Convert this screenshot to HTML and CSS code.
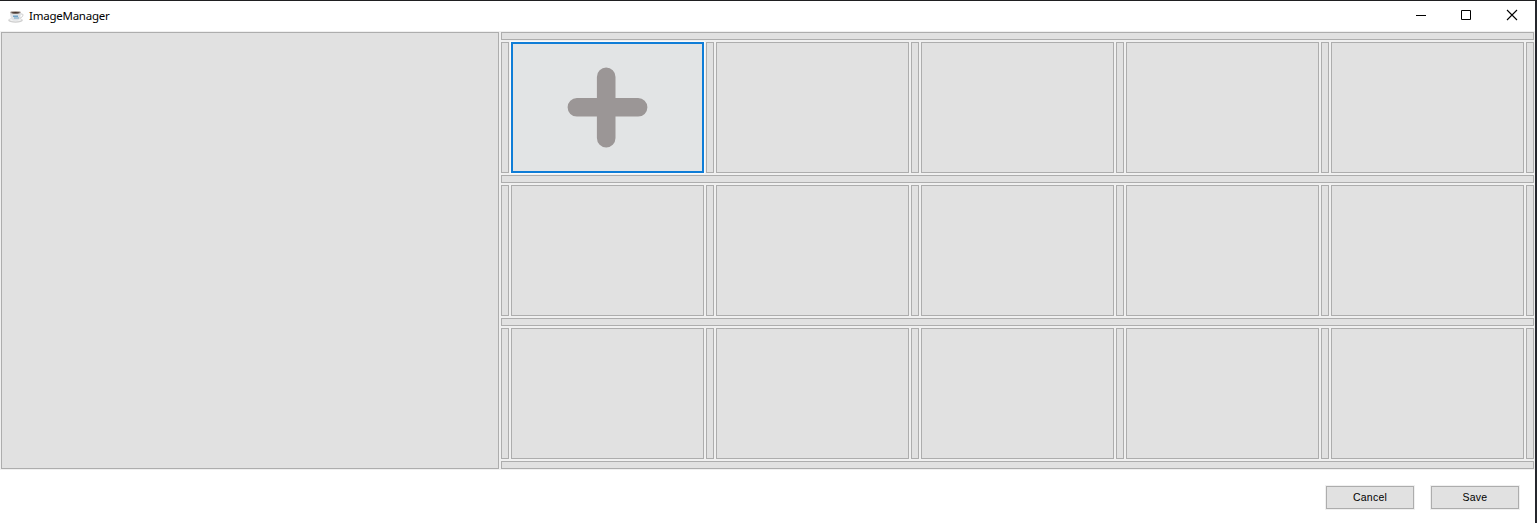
FILE: index.html
```html
<!DOCTYPE html>
<html lang="en">
<head>
<meta charset="utf-8">
<title>ImageManager</title>
<link rel="stylesheet" href="styles.css">
</head>
<body>
<div class="window">
  <header class="titlebar">
    <svg class="app-icon" width="16" height="16" viewBox="0 0 16 16">
      <ellipse cx="7.5" cy="12.3" rx="7.3" ry="2.4" fill="#cfcfcf"/>
      <ellipse cx="7.5" cy="11.800" rx="6.300" ry="1.600" fill="#f0f0f0"/>
      <path d="M12.500 6h1.600c1.400 0 1.200 3.600-2.600 4" fill="none" stroke="#c9c9c9"/>
      <path d="M2 4.500h11c0 4-1.500 7.500-3.500 8h-4C3.500 12 2 8.500 2 4.500z" fill="#dfe2e5"/>
      <ellipse cx="7.500" cy="4.500" rx="5.400" ry="1.400" fill="#b5aca6"/>
      <ellipse cx="7.500" cy="4.700" rx="4.300" ry=".8" fill="#43332b"/>
      <path d="M5 7.500h5v1.500H5zM6 9.500h5v1H6z" fill="#6fa3c8"/>
    </svg>
    <span class="title">ImageManager</span>
    <div class="controls">
      <svg width="46" height="30" viewBox="0 0 46 30"><path d="M18 14.500h10" stroke="#000"/></svg>
      <svg width="46" height="30" viewBox="0 0 46 30"><path d="M17.500 9.500h9v9h-9z" fill="none" stroke="#000"/></svg>
      <svg width="46" height="30" viewBox="0 0 46 30"><path d="M17 9l10 10M27 9l-10 10" stroke="#000" stroke-width="1.100"/></svg>
    </div>
  </header>
  <main class="content">
    <div class="tile preview"></div>
    <div class="board">
      <div class="tile"></div>
      <div class="row">
        <div class="tile"></div>
        <div class="tile add">
          <svg width="80" height="80" viewBox="0 0 80 80"><path d="M38.200 8.900v61.200M8.900 39.300h61.200" stroke="#9b9696" stroke-width="18.600" stroke-linecap="round"/></svg>
        </div>
        <div class="tile"></div><div class="tile"></div>
        <div class="tile"></div><div class="tile"></div>
        <div class="tile"></div><div class="tile"></div>
        <div class="tile"></div><div class="tile"></div>
        <div class="tile"></div>
      </div>
      <div class="tile"></div>
      <div class="row">
        <div class="tile"></div><div class="tile"></div>
        <div class="tile"></div><div class="tile"></div>
        <div class="tile"></div><div class="tile"></div>
        <div class="tile"></div><div class="tile"></div>
        <div class="tile"></div><div class="tile"></div>
        <div class="tile"></div>
      </div>
      <div class="tile"></div>
      <div class="row">
        <div class="tile"></div><div class="tile"></div>
        <div class="tile"></div><div class="tile"></div>
        <div class="tile"></div><div class="tile"></div>
        <div class="tile"></div><div class="tile"></div>
        <div class="tile"></div><div class="tile"></div>
        <div class="tile"></div>
      </div>
      <div class="tile"></div>
    </div>
  </main>
  <footer class="actions">
    <button class="button">Cancel</button>
    <button class="button">Save</button>
  </footer>
</div>
</body>
</html>
```

FILE: styles.css
```css
* { box-sizing: border-box; }
body { margin: 0; }
.window {
  width: 1537px;
  height: 523px;
  display: flex;
  flex-direction: column;
  overflow: hidden;
  background: #fff;
  border-top: 1px solid #1f1f21;
  border-right: 2px solid #25272d;
}
.titlebar {
  height: 30px;
  display: flex;
  align-items: center;
  padding-left: 8px;
}
.app-icon { margin-right: 5px; }
.title {
  font: 11.5px/16px "Noto Sans", sans-serif;
  letter-spacing: -0.24px;
  color: #000;
}
.controls { display: flex; margin-left: auto; margin-right: -1px; }
.content {
  height: 439px;
  display: grid;
  grid-template-columns: 498px 1033px;
  gap: 2px;
  padding: 1px;
  background: #f0f0f0;
}
.board {
  display: grid;
  grid-template-rows: 8px 131px 8px 131px 8px 131px 8px;
  gap: 2px;
}
.row {
  display: grid;
  grid-template-columns: repeat(5, 8px 193px) 8px;
  gap: 2px;
}
.tile { background: #e1e1e1; border: 1px solid #adadad; }
.add {
  display: flex;
  align-items: center;
  justify-content: center;
  overflow: hidden;
  background: #e2e4e5;
  border: 2px solid #0f7dd7;
  box-shadow: 0 0 0 1px #fafafa;
}
.add svg { overflow: visible; }
.actions {
  display: flex;
  gap: 17px;
  justify-content: flex-end;
  padding: 16px 16px 0 0;
}
.button {
  width: 88px;
  height: 23px;
  padding: 0;
  background: #e1e1e1;
  border: 1px solid #adadad;
  border-radius: 0;
  box-shadow: 0 0 0 1px #f0f0f0;
  font: 10.5px/21px "Liberation Sans", Arial, sans-serif;
  letter-spacing: 0.25px;
  color: #000;
}
```
